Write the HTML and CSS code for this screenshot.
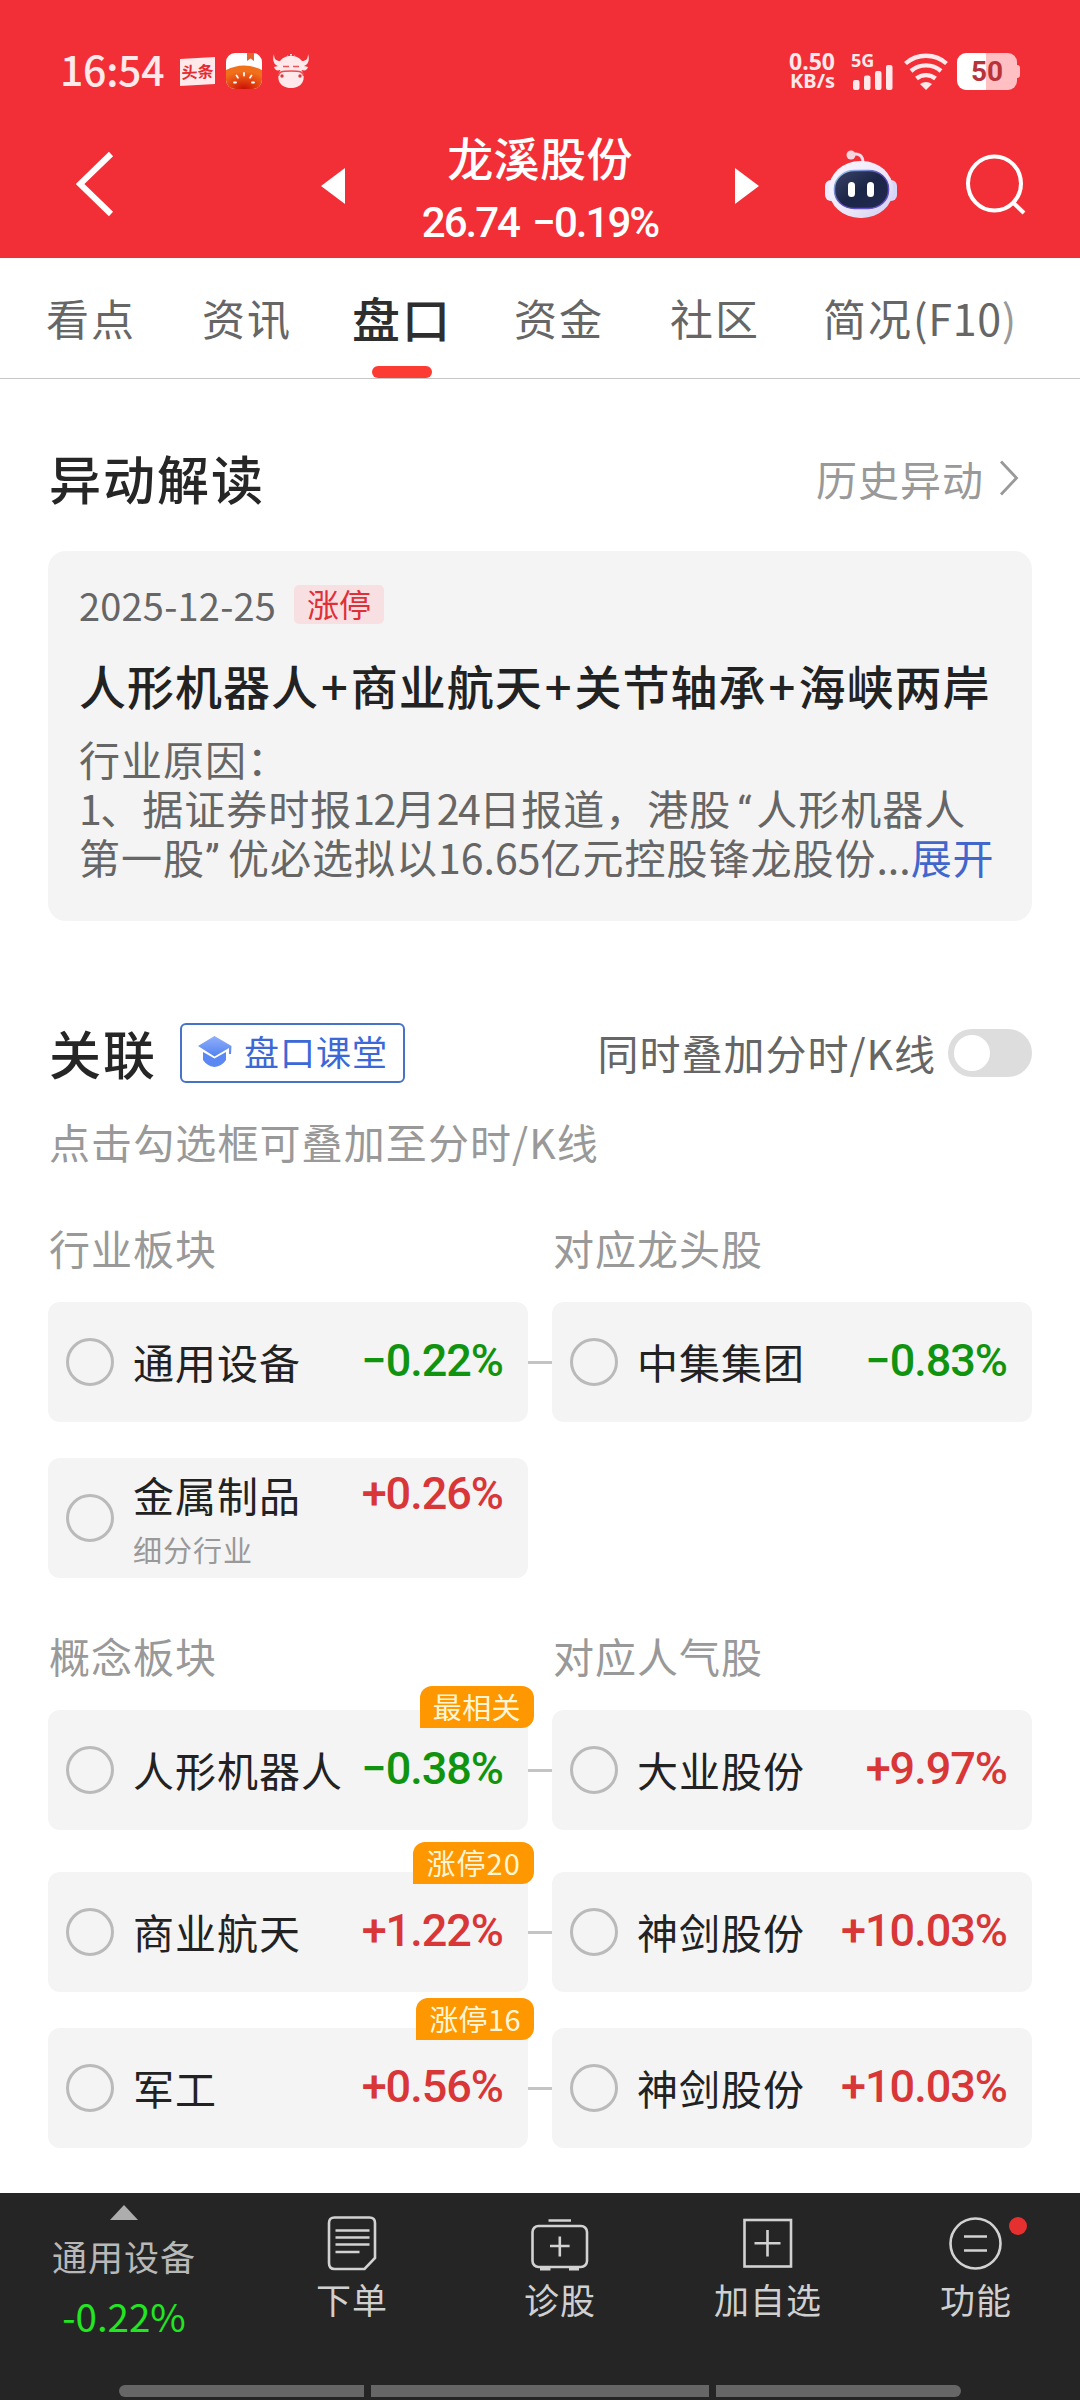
FILE: index.html
```html
<!DOCTYPE html>
<html lang="zh-CN">
<head>
<meta charset="utf-8">
<title>龙溪股份 盘口</title>
<link rel="stylesheet" href="styles.css">
</head>
<body>
<header class="header">
  <div class="status">
    <div class="status-left">
      <span class="clock">16:54</span>
      <span class="news"><span class="news-text">头条</span></span>
      <svg class="app-icon" width="36" height="36" viewBox="0 0 36 36">
        <defs>
          <clipPath id="appClip"><rect width="36" height="36" rx="9"/></clipPath>
          <radialGradient id="tomato" cx="0.5" cy="1" r="0.75"><stop offset="0" stop-color="#c80f08"/><stop offset="0.5" stop-color="#e2400f"/><stop offset="1" stop-color="#f0701c"/></radialGradient>
        </defs>
        <g clip-path="url(#appClip)">
          <rect width="36" height="36" fill="#fff"/>
          <path d="M21 0h7v8l-3.5-2.500L21 8z" fill="#e8602c"/>
          <path d="M0 17Q18 8 36 17V36H0z" fill="url(#tomato)"/>
          <g stroke="#fff" stroke-width="1.800" stroke-linecap="round"><path d="M18 20v2.500M10.500 22.500l1.500 2.200M25.500 22.500l-1.500 2.200M8 29.500h2M28 29.500h-2"/></g>
        </g>
      </svg>
      <svg class="cow-icon" width="36" height="36" viewBox="0 0 36 36">
        <g fill="#ffe9ea">
          <path d="M1 1c0 5 2 7 6 7 3-4 7-5 11-5s8 1 11 5c4 0 6-2 6-7 2 6 0 11-4 12l4 1c-1 3-3 4-6 3l-1 2H8l-1-2c-3 1-5 0-6-3l4-1C1 12-1 7 1 1z"/>
          <path d="M17 1l1 4 1-4zM14 2l2 4h4l2-4-4 3z"/>
          <path d="M7 18h22c4 7 1 17-11 17S3 25 7 18z"/>
        </g>
        <path d="M10 13.500h6M20 13.500h6" stroke="#e8565c" stroke-width="1.300"/>
        <path d="M5.500 23c0-4 3-5 12.500-5s12.500 1 12.500 5" fill="none" stroke="#ef4a51" stroke-width="1.500"/>
        <circle cx="9" cy="23" r="1.700" fill="#d83a42"/><circle cx="27" cy="23" r="1.700" fill="#d83a42"/>
      </svg>
    </div>
    <div class="status-right">
      <div class="speed"><span class="speed-num">0.50</span><span class="speed-unit">KB/s</span></div>
      <div class="signal">
        <span class="signal-gen">5G</span>
        <svg width="42" height="26" viewBox="0 0 42 26" fill="#ffe9ea"><rect x="2" y="16" width="6.500" height="10" rx="2"/><rect x="13" y="11.500" width="6.500" height="14.500" rx="2"/><rect x="24" y="7" width="6.500" height="19" rx="2"/><rect x="35" y="1" width="6.500" height="25" rx="2"/></svg>
      </div>
      <svg class="wifi" width="44" height="37" viewBox="0 0 44 37">
        <g fill="none" stroke="#ffe9ea" stroke-width="4.300"><path d="M1.500 10.500a31 31 0 0 1 41 0"/><path d="M7 18a23 23 0 0 1 30 0"/><path d="M12.500 25.500a15 15 0 0 1 19 0"/></g>
        <path d="M16 31q6-4 12 0L22 37z" fill="#ffe9ea"/>
      </svg>
      <div class="battery"><span class="battery-body"><span class="battery-num">50</span></span><span class="battery-tip"></span></div>
    </div>
  </div>
  <div class="navbar">
    <svg class="back" width="38" height="66" viewBox="0 0 38 66"><path d="M35 3L4 33L35 63" fill="none" stroke="#fff" stroke-width="6"/></svg>
    <svg class="prev" width="24" height="36" viewBox="0 0 24 36"><path d="M24 0v36L0 18z" fill="#fff"/></svg>
    <div class="stock">
      <div class="stock-name">龙溪股份</div>
      <div class="stock-price">26.74 −0.19%</div>
    </div>
    <svg class="next" width="24" height="36" viewBox="0 0 24 36"><path d="M0 0v36L24 18z" fill="#fff"/></svg>
    <svg class="robot" width="72" height="68" viewBox="0 0 72 68">
      <defs>
        <linearGradient id="shell" x1="0" y1="0" x2="1" y2="1"><stop offset="0" stop-color="#fbf8ff"/><stop offset="0.6" stop-color="#ebe6f8"/><stop offset="1" stop-color="#ccccf2"/></linearGradient>
        <linearGradient id="rim" x1="0" y1="0" x2="1" y2="1"><stop offset="0" stop-color="#a5dcf5"/><stop offset="0.5" stop-color="#5546b8"/><stop offset="1" stop-color="#6a55d0"/></linearGradient>
        <linearGradient id="visor" x1="0" y1="0" x2="1" y2="1"><stop offset="0" stop-color="#3b4468"/><stop offset="0.5" stop-color="#1b2547"/><stop offset="1" stop-color="#222b50"/></linearGradient>
      </defs>
      <path d="M26 5c8-3 12 1 12 8" fill="none" stroke="#f0dcea" stroke-width="3"/>
      <circle cx="26" cy="5" r="4.500" fill="#f7d5de"/>
      <rect x="0" y="30" width="12" height="21" rx="6" fill="#eceaff"/><rect x="60" y="30" width="12" height="21" rx="6" fill="#d6d6fa"/>
      <rect x="4" y="11" width="64" height="57" rx="31" ry="28" fill="url(#shell)"/>
      <rect x="9.500" y="20.500" width="54" height="38" rx="20" ry="18" fill="url(#visor)" stroke="url(#rim)" stroke-width="1.500"/>
      <rect x="23" y="32" width="7" height="15" rx="3.500" fill="#fff"/><rect x="42" y="32" width="7" height="15" rx="3.500" fill="#fff"/>
    </svg>
    <svg class="search" width="60" height="61" viewBox="0 0 60 61"><g fill="none" stroke="#fff" stroke-width="4"><ellipse cx="28.500" cy="29.500" rx="26.500" ry="27"/><path d="M47 48.500L58 59"/></g></svg>
  </div>
</header>

<nav class="tabs">
  <span class="tab">看点</span>
  <span class="tab">资讯</span>
  <span class="tab tab-active">盘口</span>
  <span class="tab">资金</span>
  <span class="tab">社区</span>
  <span class="tab">简况<span class="tab-latin">(F10<span class="tab-fade">)</span></span></span>
</nav>

<main class="main">
  <div class="section-head">
    <h2 class="section-title">异动解读</h2>
    <div class="more">历史异动<svg class="more-arrow" width="20" height="36" viewBox="0 0 20 36"><path d="M2 1.500L17.500 18L2 34.500" fill="none" stroke="#999" stroke-width="2.800"/></svg></div>
  </div>
  <section class="news-card">
    <div class="news-meta"><span class="date">2025-12-25</span><span class="tag">涨停</span></div>
    <h3 class="headline">人形机器人<span class="plus">+</span>商业航天<span class="plus">+</span>关节轴承<span class="plus">+</span>海峡两岸</h3>
    <p class="reason">行业原因：<br><span class="num-tight">1</span>、据证券时报<span class="num-tight">12</span>月<span class="num-tight">24</span>日报道，港股<span class="quote-open">“</span>人形机器人<br>第一股<span class="quote-close">”</span>优必选拟以<span class="num">16.65</span>亿元控股锋龙股份<span class="num">...</span><a class="expand">展开</a></p>
  </section>

  <div class="relation-head">
    <h2 class="section-title">关联</h2>
    <div class="class-btn">
      <svg width="34" height="31" viewBox="0 0 34 31">
        <defs><linearGradient id="cap" x1="0" y1="0" x2="0" y2="1"><stop offset="0" stop-color="#91b0fa"/><stop offset="1" stop-color="#5382f0"/></linearGradient></defs>
        <path d="M0 10L16.500 0L33.500 10L33 18H31V12L16.500 20.500z" fill="url(#cap)"/>
        <path d="M5 16L16.500 22.500L28 16V24Q24 30 16.500 31Q9 30 5 24z" fill="#5b88f2"/>
      </svg>
      <span class="class-text">盘口课堂</span>
    </div>
    <span class="overlay-label">同时叠加分时/K线</span>
    <span class="toggle"><span class="knob"></span></span>
  </div>
  <p class="hint">点击勾选框可叠加至分时/K线</p>

  <div class="labels labels-industry"><span>行业板块</span><span>对应龙头股</span></div>
  <div class="pair">
    <div class="item"><i class="radio"></i><span class="name">通用设备</span><b class="pct down">−0.22%</b></div>
    <i class="link"></i>
    <div class="item"><i class="radio"></i><span class="name">中集集团</span><b class="pct down">−0.83%</b></div>
  </div>
  <div class="pair pair-near">
    <div class="item item-double"><i class="radio"></i><span class="name">金属制品<small class="sub">细分行业</small></span><b class="pct up">+0.26%</b></div>
  </div>

  <div class="labels labels-concept"><span>概念板块</span><span>对应人气股</span></div>
  <div class="pair">
    <div class="item"><i class="radio"></i><span class="name">人形机器人</span><b class="pct down">−0.38%</b><em class="badge">最相关</em></div>
    <i class="link"></i>
    <div class="item"><i class="radio"></i><span class="name">大业股份</span><b class="pct up">+9.97%</b></div>
  </div>
  <div class="pair pair-far">
    <div class="item"><i class="radio"></i><span class="name">商业航天</span><b class="pct up">+1.22%</b><em class="badge badge-limit badge-wide">涨停20</em></div>
    <i class="link"></i>
    <div class="item"><i class="radio"></i><span class="name">神剑股份</span><b class="pct up">+10.03%</b></div>
  </div>
  <div class="pair pair-near">
    <div class="item"><i class="radio"></i><span class="name">军工</span><b class="pct up">+0.56%</b><em class="badge badge-limit">涨停16</em></div>
    <i class="link"></i>
    <div class="item"><i class="radio"></i><span class="name">神剑股份</span><b class="pct up">+10.03%</b></div>
  </div>
</main>

<footer class="footer">
  <div class="actions">
    <div class="ticker">
      <svg width="28" height="15" viewBox="0 0 28 15"><path d="M14 0L28 15H0z" fill="#adadad"/></svg>
      <span class="ticker-name">通用设备</span>
      <span class="ticker-pct">-0.22%</span>
    </div>
    <div class="action">
      <svg width="58" height="56" viewBox="0 0 58 56" fill="none" stroke="#d2d2d2" stroke-width="2.600"><path d="M11.500 2.500H46.500Q52 2.500 52 8V43L41.500 54H11.500Q6 54 6 48V8Q6 2.500 11.500 2.500z"/><path d="M12.500 15.500H46.500M12.500 22.500H46.500M12.500 29.500H46.500M12.500 37H36.500"/></svg>
      <span>下单</span>
    </div>
    <div class="action">
      <svg width="58" height="56" viewBox="0 0 58 56" fill="none" stroke="#d2d2d2" stroke-width="2.600"><rect x="1.500" y="11" width="54.500" height="41" rx="6"/><path d="M17.500 5.500H40M28.800 21.500V41.500M19 31H38.600"/><path d="M9 54H19.500M38 54H48" stroke-width="3"/></svg>
      <span>诊股</span>
    </div>
    <div class="action">
      <svg width="58" height="56" viewBox="0 0 58 56" fill="none" stroke="#d2d2d2" stroke-width="2.600"><rect x="5.500" y="5" width="46.500" height="46.500"/><path d="M28.500 15V41.500M15.500 28.200H41.500"/></svg>
      <span>加自选</span>
    </div>
    <div class="action">
      <svg width="58" height="56" viewBox="0 0 58 56" fill="none" stroke="#d2d2d2" stroke-width="2.600"><circle cx="28.500" cy="28.500" r="25"/><path d="M17 21.500H40M17 35.500H40"/></svg>
      <span>功能</span>
      <i class="dot"></i>
    </div>
  </div>
  <div class="gesture"><i></i><i></i><i></i></div>
</footer>
</body>
</html>
```
FILE: styles.css
```css
* { box-sizing: border-box; margin: 0; padding: 0; }
body {
  width: 1080px;
  height: 2400px;
  display: flex;
  flex-direction: column;
  background: #fff;
  font-family: "Noto Sans CJK SC", sans-serif;
  font-size: 41px;
  letter-spacing: 1px;
  white-space: nowrap;
  overflow: hidden;
}
svg { display: block; flex: none; }
i, em, b, small { font-style: normal; font-weight: inherit; }

/* header */
.header { height: 258px; background: #f22f37; color: #fff; }
.status { height: 110px; padding: 32px 60px 0 60px; display: flex; justify-content: space-between; align-items: center; color: #ffe9ea; }
.status-left, .status-right { display: flex; align-items: center; }
.clock { width: 120px; font-size: 41px; font-weight: 500; letter-spacing: -0.3px; line-height: 50px; padding-bottom: 7px; }
.news { width: 35px; height: 27px; margin-right: 11px; background: #ffe9ea; transform: skewY(-3deg); display: flex; align-items: center; justify-content: center; color: #e22d35; }
.news-text { font-size: 16px; font-weight: 700; letter-spacing: 0; line-height: 20px; padding-bottom: 2px; }
.cow-icon { margin-left: 11px; }
.speed { width: 46px; display: flex; flex-direction: column; align-items: flex-end; font-family: "Noto Sans", sans-serif; font-weight: 700; letter-spacing: 0; }
.speed-num { font-size: 23px; line-height: 20px; }
.speed-unit { font-size: 20px; line-height: 20px; }
.signal { width: 42px; margin-left: 16px; height: 38px; display: flex; flex-direction: column; justify-content: space-between; }
.signal-gen { font-family: "Noto Sans", sans-serif; font-size: 18px; font-weight: 700; line-height: 17px; letter-spacing: 0; height: 12px; }
.wifi { margin-left: 11px; }
.battery { margin-left: 9px; display: flex; align-items: center; }
.battery-body { width: 60px; height: 37px; border-radius: 9px; background: linear-gradient(90deg, #fff 29px, #ffbfc3 29px); display: flex; align-items: center; justify-content: center; }
.battery-num { font-family: Roboto, sans-serif; font-size: 28px; font-weight: 700; letter-spacing: 0; line-height: 37px; color: #b8323a; }
.battery-tip { width: 3px; height: 13px; border-radius: 0 3px 3px 0; background: #ffbfc3; }

.navbar { height: 148px; padding-left: 76px; display: flex; align-items: center; }
.prev { margin-left: 207px; position: relative; top: 2px; }
.stock { width: 390px; padding-top: 11px; text-align: center; }
.stock-name { font-size: 46px; font-weight: 500; letter-spacing: 0.4px; line-height: 66px; }
.stock-price { font-family: Roboto, sans-serif; font-size: 42px; font-weight: 500; letter-spacing: -2px; word-spacing: 5px; line-height: 68px; }
.next { position: relative; top: 2px; }
.robot { margin-left: 66px; }
.search { margin-left: 69px; }

/* tabs */
.tabs { height: 121px; padding: 0 0 3px 46px; border-bottom: 1px solid #c6c6c6; display: grid; grid-template-columns: 156px 150px 162px 156px 153px 1fr; align-items: center; }
.tab { position: relative; font-size: 43px; letter-spacing: 2px; line-height: 60px; color: #666; }
.tab-active { font-size: 48px; font-weight: 500; color: #2e2e2e; }
.tab-active::after { content: ""; position: absolute; left: 20px; bottom: -31px; width: 60px; height: 12px; border-radius: 6px; background: #fc3b33; }
.tab-latin { letter-spacing: 0.7px; }
.tab-fade { color: #999; }

/* abnormal movement */
.main { padding: 59px 48px 0; }
.section-head { height: 80px; margin-bottom: 33px; padding-right: 13px; display: flex; justify-content: space-between; align-items: center; }
.section-title { padding-left: 1px; font-size: 52px; font-weight: 500; letter-spacing: 2px; line-height: 60px; color: #262626; }
.more { display: flex; align-items: center; color: #999; }
.more-arrow { margin-left: 15px; }
.news-card { height: 370px; padding: 34px 31px 0; border-radius: 18px; background: #f4f4f4; }
.news-meta { display: flex; align-items: center; height: 39px; }
.date { width: 215px; font-size: 38px; letter-spacing: 0.2px; line-height: 39px; color: #666; }
.tag { width: 90px; height: 39px; border-radius: 5px; background: #f8e0e2; font-size: 32px; letter-spacing: 0; line-height: 36px; text-align: center; color: #df3038; }
.headline { margin-top: 31px; font-size: 47px; font-weight: 500; line-height: 60px; color: #222; }
.plus { padding: 0 2px; }
.reason { margin-top: 19px; line-height: 49px; color: #666; }
.num { letter-spacing: 0; }
.num-tight { letter-spacing: -1.5px; }
.quote-open, .quote-close { display: inline-block; font-family: Roboto, sans-serif; letter-spacing: 0; line-height: 40px; }
.quote-open { width: 25px; padding-left: 6px; }
.quote-close { width: 23px; padding-left: 0; }
.expand { color: #4166cc; }

/* relation */
.relation-head { height: 60px; margin-top: 102px; display: flex; align-items: center; }
.class-btn { width: 225px; height: 60px; margin-left: 23px; padding: 0 0 3px 16px; border: 2px solid #4672c8; border-radius: 6px; display: flex; align-items: center; }
.class-text { margin-left: 12px; font-size: 35px; line-height: 52px; padding-bottom: 2px; color: #3c68d8; }
.overlay-label { margin-left: auto; padding-bottom: 3px; color: #666; }
.toggle { width: 84px; height: 48px; margin-left: 12px; padding: 6px; border-radius: 24px; background: #ddd; }
.knob { display: block; width: 36px; height: 36px; border-radius: 50%; background: #fff; }
.hint { margin-top: 33px; padding-left: 1px; line-height: 50px; letter-spacing: 1.1px; color: #999; }
.labels { display: grid; grid-template-columns: 504px 480px; padding-left: 1px; margin-bottom: 30px; line-height: 50px; color: #999; }
.labels-industry { margin-top: 56px; }
.labels-concept { margin-top: 52px; }
.pair { display: grid; grid-template-columns: 480px 24px 480px; align-items: center; }
.pair-near { margin-top: 36px; }
.pair-far { margin-top: 42px; }
.link { height: 3px; background: #c4c4c4; }
.item { position: relative; height: 120px; padding: 0 25px 0 18px; border-radius: 12px; background: #f4f4f4; display: flex; align-items: center; }
.radio { width: 48px; height: 48px; border: 3px solid #bababa; border-radius: 50%; }
.name { margin-left: 19px; padding-bottom: 2px; line-height: 60px; color: #222; }
.pct { margin-left: auto; font-family: Roboto, sans-serif; font-size: 45px; font-weight: 500; letter-spacing: -1px; line-height: 60px; padding-bottom: 3px; }
.down { color: #109410; }
.up { color: #d93638; }
.item-double { align-items: flex-start; }
.item-double .radio { margin-top: 36px; }
.item-double .name { margin-top: 6px; display: flex; flex-direction: column; }
.item-double .pct { margin-top: 6px; }
.sub { font-size: 29px; line-height: 40px; margin-top: 5px; color: #999; }
.badge { position: absolute; right: -6px; top: -24px; height: 42px; padding: 0 13px; border-radius: 12px 12px 12px 0; background: #ff9800; color: #fff6d8; font-size: 29px; letter-spacing: 0.4px; line-height: 40px; }
.badge-limit { top: -30px; }
.badge-wide { letter-spacing: 1.1px; }

/* footer */
.footer { margin-top: auto; height: 207px; background: #252525; display: flex; flex-direction: column; justify-content: space-between; padding-bottom: 3px; }
.actions { display: grid; grid-template-columns: 248px repeat(4, 208px); }
.ticker { padding-top: 12px; display: flex; flex-direction: column; align-items: center; }
.ticker-name { margin-top: 12px; font-size: 35px; line-height: 48px; color: #b8b8b8; }
.ticker-pct { margin-top: 10px; font-size: 38.5px; letter-spacing: 0; line-height: 50px; color: #22e622; }
.action { position: relative; padding-top: 22px; display: flex; flex-direction: column; align-items: center; color: #d0d0d0; font-size: 35px; }
.action span { margin-top: 4px; line-height: 48px; }
.dot { position: absolute; left: 137px; top: 24px; width: 18px; height: 18px; border-radius: 50%; background: #e63030; }
.gesture { display: grid; grid-template-columns: 245px 338px 245px; gap: 7px; padding-left: 119px; }
.gesture i { height: 12px; background: #666; }
.gesture i:first-child { border-radius: 6px 0 0 6px; }
.gesture i:last-child { border-radius: 0 6px 6px 0; }
```
